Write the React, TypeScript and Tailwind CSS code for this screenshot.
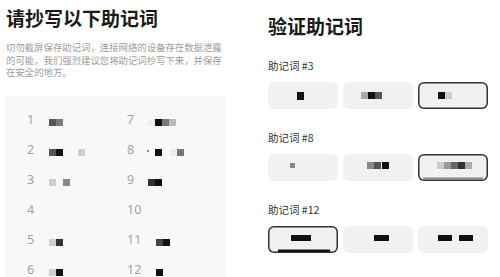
import React from 'react';

type Px = [number, number, string, number?, number?]; // x, y, color, w, h

const font = { fontFamily: '"Noto Sans CJK SC", "Noto Sans", sans-serif' };

// mosaic blocks for the blurred words, x relative to the word start
const words: Record<number, Px[]> = {
  1: [[0, 0, '#555'], [7, 0, '#7a7a7a']],
  2: [[0, 0, '#555'], [7, 0, '#111'], [29, 0, '#cfcfcf']],
  3: [[0, 0, '#cdcdcd'], [14, 0, '#888']],
  4: [],
  5: [[0, 0, '#cfcfcf'], [7, 0, '#333']],
  6: [[0, 0, '#cfcfcf'], [7, 0, '#111']],
  7: [[0, 0, '#eeeeee'], [7, 0, '#111'], [14, 0, '#777'], [21, 0, '#bbb']],
  8: [[-1, 1, '#888', 2, 2], [7, 0, '#111'], [22, 0, '#eeeeee'], [29, 0, '#777']],
  9: [[0, 0, '#333'], [7, 0, '#111']],
  10: [],
  11: [[8, 0, '#444'], [15, 0, '#111']],
  12: [[8, 0, '#111']],
};

function Mosaic({ px, w, h }: { px: Px[]; w: number; h: number }) {
  return (
    <svg width={w} height={h} viewBox={`0 0 ${w} ${h}`} className="block shrink-0">
      {px.map(([x, y, c, pw, ph], i) => (
        <rect key={i} x={x + 1} y={y} width={pw ?? 7} height={ph ?? 7} fill={c} />
      ))}
    </svg>
  );
}

type Choice = { px: Px[]; selected?: boolean; bar?: string };

const questions: { n: number; choices: Choice[] }[] = [
  {
    n: 3,
    choices: [
      { px: [[29, 10, '#111', 7, 8]] },
      { px: [[18, 10, '#aaa'], [25, 10, '#111'], [32, 10, '#555'], [46, 10, '#eeeeee']] },
      { px: [[20, 10, '#111'], [27, 10, '#cccccc']], selected: true },
    ],
  },
  {
    n: 8,
    choices: [
      { px: [[22, 9, '#888', 5, 5]] },
      { px: [[24, 8, '#888'], [31, 8, '#555'], [39, 8, '#111']] },
      {
        px: [[19, 8, '#ccc'], [26, 8, '#999'], [33, 8, '#666'], [40, 8, '#333'], [47, 8, '#aaa']],
        selected: true,
        bar: '#8a8a8a',
      },
    ],
  },
  {
    n: 12,
    choices: [
      { px: [[23, 9, '#111', 20, 6]], selected: true, bar: '#111' },
      { px: [[31, 9, '#111', 15, 6]] },
      { px: [[20, 9, '#111', 14, 6], [41, 9, '#111', 14, 6]] },
    ],
  },
];

function ChoiceButton({ c }: { c: Choice }) {
  return (
    <div
      className={`w-[70px] h-[27px] rounded-[6px] bg-[#f1f1f1] overflow-hidden ${
        c.selected ? 'shadow-[inset_0_0_0_1.5px_#333]' : ''
      }`}
    >
      <svg width={70} height={27} viewBox="0 0 70 27" className="block">
        {c.px.map(([x, y, col, pw, ph], i) => (
          <rect key={i} x={x} y={y} width={pw ?? 7} height={ph ?? 7} fill={col} />
        ))}
        {c.bar && (
          <rect x={c.bar === '#111' ? 10 : 5} y={23.5} width={c.bar === '#111' ? 52 : 60} height={2.5} fill={c.bar} />
        )}
      </svg>
    </div>
  );
}

function Cell({ n, col }: { n: number; col: number }) {
  return (
    <div className="flex items-center h-[30px]">
      <span className={`${col === 0 ? 'w-[21px]' : 'w-[20px]'} text-[12.5px] leading-none text-[#a3a3a3] shrink-0`} style={{ fontFamily: '"Noto Sans", sans-serif' }}>
        {n}
      </span>
      <div className="pt-[5px]">
        <Mosaic px={words[n]} w={42} h={8} />
      </div>
    </div>
  );
}

export default function App() {
  return (
    <div className="w-[500px] h-[277px] bg-white overflow-hidden flex" style={font}>
      {/* left: write down */}
      <div className="w-[250px] shrink-0 flex flex-col">
        <h1 className="pl-[6px] pt-[6px] text-[19px] leading-[24px] font-bold text-[#1a1a1a] whitespace-nowrap">
          请抄写以下助记词
        </h1>
        <p className="pl-[6px] mt-[11px] text-[9.4px] leading-[12.5px] text-[#9c9c9c] whitespace-nowrap">
          切勿截屏保存助记词，连接网络的设备存在数据泄露
          <br />
          的可能，我们强烈建议您将助记词抄写下来，并保存
          <br />
          在安全的地方。
        </p>
        <div className="ml-[5px] mt-[17px] w-[220px] flex-1 bg-[#f8f8f8] pl-[22px] pt-[10px] grid grid-cols-[100px_1fr]">
          <div className="flex flex-col">
            {[1, 2, 3, 4, 5, 6].map(n => (
              <Cell key={n} n={n} col={0} />
            ))}
          </div>
          <div className="flex flex-col">
            {[7, 8, 9, 10, 11, 12].map(n => (
              <Cell key={n} n={n} col={1} />
            ))}
          </div>
        </div>
      </div>

      {/* right: verify */}
      <div className="pl-[18px] pt-[14px] flex flex-col">
        <h2 className="text-[19px] leading-[24px] font-bold text-[#1a1a1a]">验证助记词</h2>
        {questions.map((q, qi) => (
          <div key={q.n} className={qi === 0 ? 'mt-[21px]' : 'mt-[22px]'}>
            <div className="text-[10.5px] leading-[14px] text-[#333]">助记词 #{q.n}</div>
            <div className="mt-[9px] flex gap-[5px]">
              {q.choices.map((c, i) => (
                <ChoiceButton key={i} c={c} />
              ))}
            </div>
          </div>
        ))}
      </div>
    </div>
  );
}
